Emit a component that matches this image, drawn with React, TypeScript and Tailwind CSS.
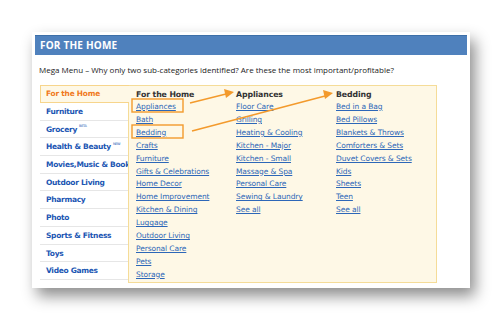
import React from 'react';

const navItems = [
  { label: 'Furniture' },
  { label: 'Grocery', sup: 'BETA' },
  { label: 'Health & Beauty', sup: 'NEW' },
  { label: 'Movies,Music & Books' },
  { label: 'Outdoor Living' },
  { label: 'Pharmacy' },
  { label: 'Photo' },
  { label: 'Sports & Fitness' },
  { label: 'Toys' },
  { label: 'Video Games' },
];

const columns = [
  {
    title: 'For the Home',
    links: [
      'Appliances',
      'Bath',
      'Bedding',
      'Crafts',
      'Furniture',
      'Gifts & Celebrations',
      'Home Decor',
      'Home Improvement',
      'Kitchen & Dining',
      'Luggage',
      'Outdoor Living',
      'Personal Care',
      'Pets',
      'Storage',
    ],
  },
  {
    title: 'Appliances',
    links: [
      'Floor Care',
      'Grilling',
      'Heating & Cooling',
      'Kitchen - Major',
      'Kitchen - Small',
      'Massage & Spa',
      'Personal Care',
      'Sewing & Laundry',
      'See all',
    ],
  },
  {
    title: 'Bedding',
    links: [
      'Bed in a Bag',
      'Bed Pillows',
      'Blankets & Throws',
      'Comforters & Sets',
      'Duvet Covers & Sets',
      'Kids',
      'Sheets',
      'Teen',
      'See all',
    ],
  },
];

const verdana = { fontFamily: '"DejaVu Sans", Verdana, sans-serif' };
const calibri = { fontFamily: '"Open Sans", "Liberation Sans", sans-serif' };

const App: React.FC = () => {
  return (
    <div className="w-[502px] h-[321px] bg-white overflow-hidden pl-[32px] pt-[32px]">
      <div className="w-[438px] h-[256px] bg-white pt-[3px] px-[3px] shadow-[5px_8px_14px_rgba(0,0,0,0.45)]">
        {/* title bar */}
        <div
          className="h-[20px] bg-[#4f81bd] border-t border-[#3d6fa8] text-white font-bold text-[10px] leading-[19px] pl-[5px] tracking-[0.2px]"
          style={calibri}
        >
          FOR THE HOME
        </div>

        <div className="mt-[9px] pl-[4px] text-[8px] text-[#222] leading-[12px]" style={calibri}>
          Mega Menu – Why only two sub-categories identified? Are these the most important/profitable?
        </div>

        {/* mega menu */}
        <div className="relative mt-[9px] ml-[5px] w-[396px] h-[198px] flex" style={verdana}>
          <div className="w-[88px] flex flex-col">
            <div className="relative z-10 w-[89px] h-[18px] bg-[#fef8e6] border border-r-0 border-[#f7d58c] font-bold text-[7.4px] leading-[16px] pl-[5px] tracking-[-0.2px] text-[#f07820]">
              For the Home
            </div>
            {navItems.map((n) => (
              <div
                key={n.label}
                className="h-[17.7px] border-b border-[#e6e6e6] text-[#1b56b3] font-bold text-[7.5px] leading-[18px] pl-[6px] whitespace-nowrap tracking-[-0.3px]"
              >
                {n.label}
                {n.sup && <sup className="text-[3.5px] font-normal ml-[2px] align-[3px]">{n.sup}</sup>}
              </div>
            ))}
          </div>

          <div className="flex-1 h-[198px] bg-[#fef8e6] border border-[#f5dc98] flex pl-[7px] pt-[3px]">
            {columns.map((c) => (
              <div key={c.title} className="w-[100px] flex flex-col">
                <div className="text-[7.8px] font-bold text-[#333] leading-[12px] tracking-[-0.1px]">{c.title}</div>
                {c.links.map((l, i) => (
                  <div
                    key={l + i}
                    className="text-[7.5px] text-[#2d67b8] underline underline-offset-[1px] leading-[12.9px] whitespace-nowrap tracking-[-0.1px]"
                  >
                    {l}
                  </div>
                ))}
              </div>
            ))}
          </div>

          {/* annotations */}
          <svg className="absolute left-0 top-0 pointer-events-none" width="396" height="198" viewBox="0 0 396 198">
            <rect x="92" y="14" width="51" height="13" fill="none" stroke="#f39a2c" strokeWidth="1.4" />
            <rect x="92" y="40" width="51" height="13" fill="none" stroke="#f39a2c" strokeWidth="1.4" />
            <line x1="150" y1="18" x2="186" y2="9" stroke="#f39a2c" strokeWidth="1.6" />
            <polygon points="194,7 184,4 186,13" fill="#f39a2c" />
            <line x1="152" y1="46" x2="285" y2="11" stroke="#f39a2c" strokeWidth="1.6" />
            <polygon points="293,8 283,5 285,14" fill="#f39a2c" />
          </svg>
        </div>
      </div>
    </div>
  );
};

export default App;
